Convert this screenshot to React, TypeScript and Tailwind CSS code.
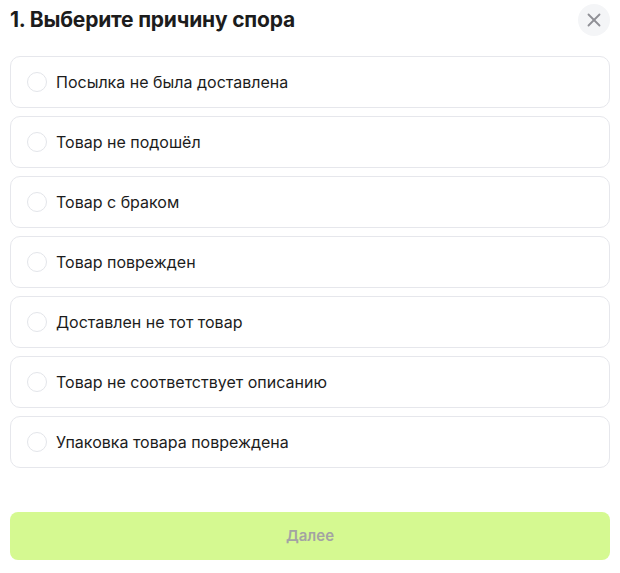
import { X } from 'lucide-react';

const reasons = [
  'Посылка не была доставлена',
  'Товар не подошёл',
  'Товар с браком',
  'Товар поврежден',
  'Доставлен не тот товар',
  'Товар не соответствует описанию',
  'Упаковка товара повреждена',
];

const App = () => {
  return (
    <div className="w-[620px] h-[573px] bg-white px-[10px] font-['Inter',sans-serif] text-[#1c1c1c]">
      <header className="flex items-center justify-between h-10">
        <h1 className="text-[21px] font-bold tracking-[-0.2px]">1. Выберите причину спора</h1>
        <button className="w-8 h-8 rounded-full bg-[#f4f5f7] flex items-center justify-center text-[#909096]">
          <X size={22} strokeWidth={2} />
        </button>
      </header>

      <div className="mt-4 flex flex-col gap-2">
        {reasons.map((reason) => (
          <label
            key={reason}
            className="h-[52px] flex items-center gap-[9px] pl-4 border border-[#e6e7ec] rounded-[10px] cursor-pointer"
          >
            <span className="w-5 h-5 rounded-full border border-[#e3e5ea] bg-white"></span>
            <span className="text-[16px]">{reason}</span>
          </label>
        ))}
      </div>

      <button
        disabled
        className="mt-11 w-full h-12 rounded-lg bg-[#d5f991] text-[#a3a3a3] text-[15px] font-semibold"
      >
        Далее
      </button>
    </div>
  );
};

export default App;
